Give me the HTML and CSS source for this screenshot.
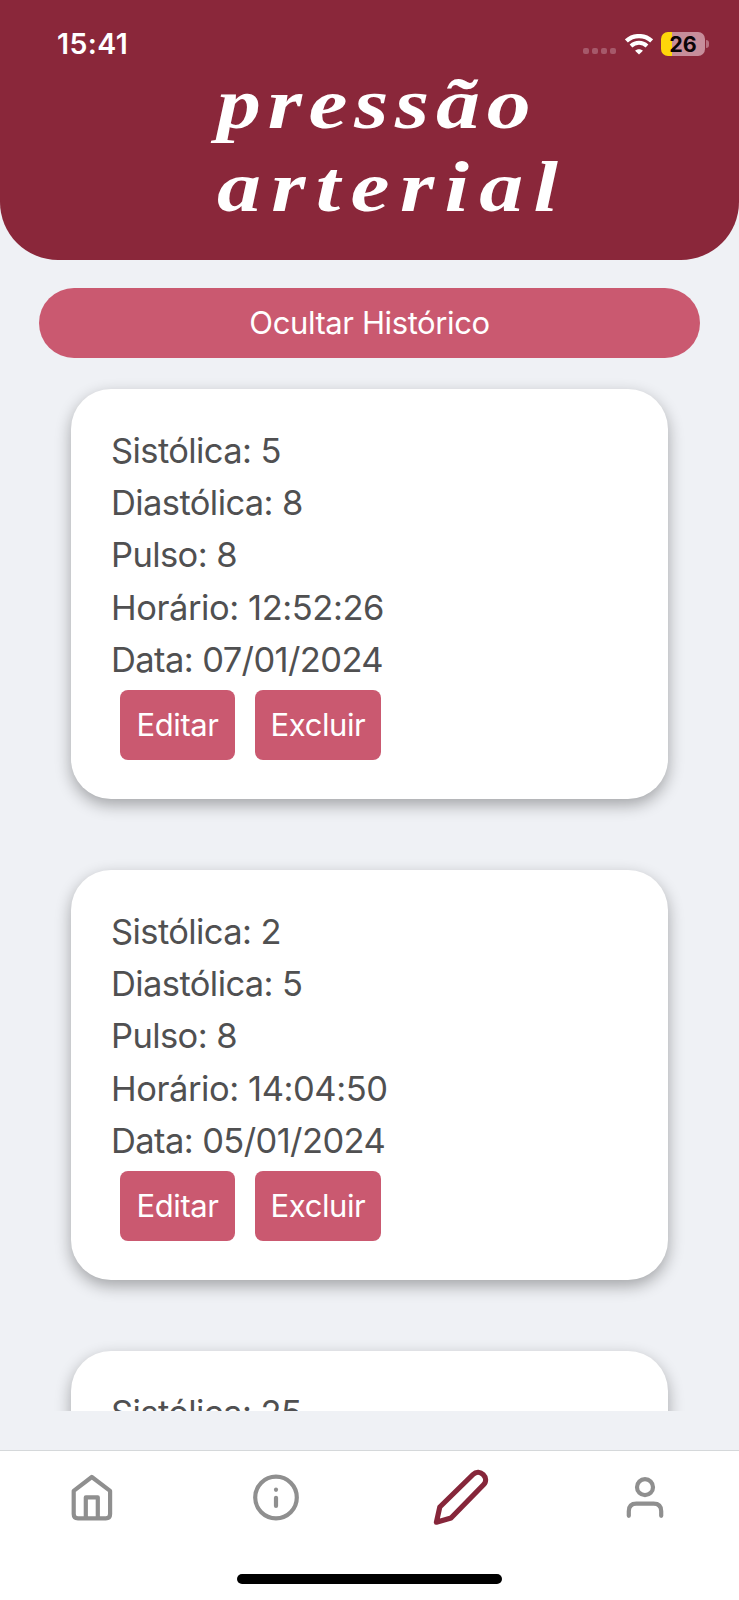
FILE: index.html
```html
<!DOCTYPE html>
<html lang="pt-BR">
<head>
<meta charset="utf-8">
<title>Pressão arterial</title>
<link rel="stylesheet" href="styles.css">
</head>
<body>
<div class="app">
  <header class="header">
    <div class="status">
      <span class="clock">15:41</span>
      <div class="status-icons">
        <span class="signal"><i></i><i></i><i></i><i></i></span>
        <svg class="wifi" width="28" height="21" viewBox="0 0 28 21" fill="none" stroke="#fff">
          <path d="M1.4 6.9C8.4.4 19.6.4 26.6 6.9" stroke-width="4.2"/>
          <path d="M6 11.9c4.6-4.2 11.4-4.2 16 0" stroke-width="4"/>
          <path d="M14 20.6l-3.9-3.9c2.2-2 5.6-2 7.8 0z" fill="#fff" stroke="none"/>
        </svg>
        <span class="battery">26</span>
        <span class="battery-tip"></span>
      </div>
    </div>
    <h1 class="title"><span class="title-a">pressão</span><span class="title-b">arterial</span></h1>
  </header>
  <main class="content">
    <button class="toggle">Ocultar Histórico</button>
    <div class="list">
      <section class="card">
        <p>Sistólica: 5</p><p>Diastólica: 8</p><p>Pulso: 8</p><p class="time">Horário: 12:52:26</p><p>Data: 07/01/2024</p>
        <div class="actions"><button class="edit">Editar</button><button class="remove">Excluir</button></div>
      </section>
      <section class="card">
        <p>Sistólica: 2</p><p>Diastólica: 5</p><p>Pulso: 8</p><p class="time">Horário: 14:04:50</p><p>Data: 05/01/2024</p>
        <div class="actions"><button class="edit">Editar</button><button class="remove">Excluir</button></div>
      </section>
      <section class="card">
        <p>Sistólica: 25</p>
      </section>
    </div>
  </main>
  <nav class="tabs">
    <div class="tab-row">
      <a class="tab"><svg width="46" height="50" viewBox="0 0 46 50"><path d="M4.7 18.9 22.8 5l18.3 13.9v23.2q0 4.3-4.3 4.3H9q-4.3 0-4.3-4.3zM16.8 46V25.4h12V46"/></svg></a>
      <a class="tab"><svg width="50" height="50" viewBox="0 0 50 50"><circle cx="25" cy="25.5" r="20.8"/><path d="M25 25.8v8.2"/><path d="M25 17.7v.1"/></svg></a>
      <a class="tab active"><svg width="60" height="60" viewBox="0 0 60 60"><path d="M5.4 55.2 8.8 40 42 7.5c6.8-6.6 17 3.5 10.5 10.3L20 51z"/></svg></a>
      <a class="tab"><svg width="50" height="50" viewBox="0 0 50 50"><circle cx="25" cy="15.2" r="8"/><path d="M8.8 43.8v-4.6q0-7.6 7.6-7.6h17.2q7.6 0 7.6 7.6v4.6"/></svg></a>
    </div>
    <div class="home-bar"></div>
  </nav>
</div>
</body>
</html>
```
FILE: styles.css
```css
* { box-sizing: border-box; margin: 0; padding: 0; }
body { font-family: Inter, "Noto Sans", sans-serif; background: #eff1f5; }
.app { width: 739px; height: 1600px; display: flex; flex-direction: column; overflow: hidden; }
.header { height: 260px; flex: none; background: #8a273a; color: #fff; border-radius: 0 0 58px 58px; }
.status { height: 70px; padding: 18px 30px 0 57px; display: flex; justify-content: space-between; align-items: center; }
.clock { font-size: 28.5px; font-weight: 600; line-height: 34px; letter-spacing: .4px; }
.status-icons { display: flex; align-items: center; }
.signal { display: flex; gap: 3px; margin: 14px 9px 0 0; }
.signal i { width: 6px; height: 6px; border-radius: 2px; background: #a6596a; }
.battery { width: 44px; height: 24px; margin-left: 8px; border-radius: 7px; background: linear-gradient(90deg, #ffd60a 11px, #c78e9b 11px); color: #0b0507; font-size: 21.5px; font-weight: 700; line-height: 25px; text-align: center; }
.battery-tip { width: 3px; height: 8px; margin-left: 1px; border-radius: 0 3px 3px 0; background: #b8707f; }
.title { margin-top: -7px; padding-left: 217px; font: italic 700 72px/83px "Liberation Serif", serif; }
.title span { display: block; white-space: nowrap; transform: scaleX(1.22); transform-origin: 0 0; }
.title-a { letter-spacing: 5.5px; }
.title-b { letter-spacing: 8.5px; }
.content { height: 1151px; flex: none; overflow: hidden; padding-top: 28px; }
button { display: block; border: 0; height: 70px; background: #ca5970; color: #fff; font: 31px/70px Inter, sans-serif; text-align: center; }
.toggle { width: 661px; margin: 0 auto 31px; border-radius: 35px; letter-spacing: -.4px; }
.list { display: flex; flex-direction: column; gap: 71px; padding: 0 71px; }
.card { height: 410px; flex: none; padding: 36px 40px 40px; background: #fff; border-radius: 40px; color: #505051; box-shadow: 0 6px 16px rgba(0,0,0,.32); }
.card p { font-size: 34.5px; line-height: 52.2px; letter-spacing: -.6px; white-space: nowrap; }
.card .time { letter-spacing: -.43px; }
.actions { display: flex; gap: 20px; margin-top: 4px; padding-left: 9px; }
.actions button { border-radius: 8px; letter-spacing: -.4px; }
.edit { width: 115px; }
.remove { width: 126px; }
.tabs { margin-top: 39px; height: 150px; border-top: 1px solid #d5d8da; background: #fff; }
.tab-row { display: grid; grid-template-columns: repeat(4, 1fr); height: 92px; padding-right: 2px; }
.tab { display: flex; align-items: center; justify-content: center; color: #8f8f8f; }
.tab svg { fill: none; stroke: currentColor; stroke-width: 4.2; stroke-linecap: round; stroke-linejoin: round; }
.active { color: #86263a; }
.active svg { stroke-width: 5.2; }
.home-bar { width: 265px; height: 10px; margin: 31px auto 0; border-radius: 5px; background: #000; }
```
